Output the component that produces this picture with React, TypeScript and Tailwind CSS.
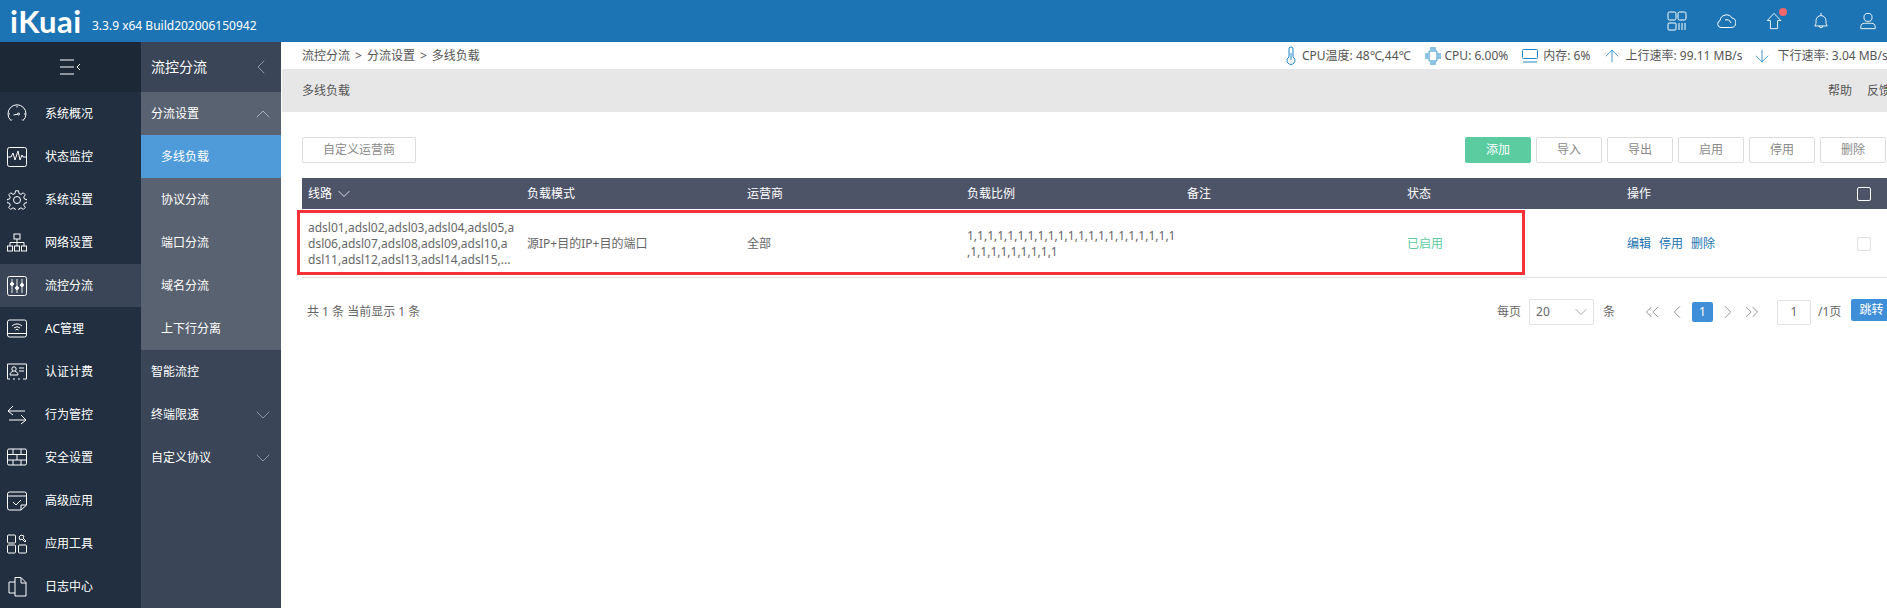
import { ChevronDown, ChevronLeft, ChevronRight, ChevronUp, ChevronsLeft, ChevronsRight, ArrowUp, ArrowDown } from "lucide-react";
import type { ReactNode } from "react";

const font = { fontFamily: '"Noto Sans", "Noto Sans CJK SC", sans-serif' };

function Svg({ children, className = "w-5 h-5" }: { children: ReactNode; className?: string }) {
  return (
    <svg viewBox="0 0 20 20" fill="none" stroke="currentColor" strokeWidth="1" className={className}>
      {children}
    </svg>
  );
}

const navIcons: Record<string, ReactNode> = {
  gauge: <><path d="M4 16.500a9 9 0 1 1 12 0" /><path d="M4 16.500l1-1M16 16.500l-1-1M1.500 10h1.500M17 10h1.500M10 2v1.500" /><circle cx="11.500" cy="10" r="1" /><path d="M10.500 10.200l-4 .8" /></>,
  pulse: <><rect x="0.500" y="0.500" width="19" height="19" rx="2" /><path d="M1 10h3l2-4 2 7 3-9 2 9 2-5 1 2h3" /></>,
  gear: <><circle cx="10" cy="10" r="3.500" /><path d="M8.500 0.800h3l.5 2.700 2 .9 2.300-1.600 2 2-1.600 2.300.9 2 2.700.5v3l-2.700.5-.9 2 1.600 2.300-2 2-2.300-1.600-2 .9-.5 2.700h-3l-.5-2.700-2-.9-2.300 1.600-2-2 1.600-2.300-.9-2-2.700-.5v-3l2.700-.5.9-2-1.600-2.300 2-2 2.300 1.600 2-.9z" /></>,
  network: <><rect x="7" y="1" width="6" height="5" /><rect x="0.500" y="13" width="5" height="5" /><rect x="7.500" y="13" width="5" height="5" /><rect x="14.500" y="13" width="5" height="5" /><path d="M10 6v7M3 13v-3.500h14V13" /></>,
  sliders: <><rect x="0.500" y="0.500" width="19" height="19" rx="2" /><path d="M5 3v14M10 3v14M15 3v14" strokeWidth="1.500" stroke="#aeb4bc" /><circle cx="5" cy="8" r="1.500" fill="currentColor" /><circle cx="10" cy="12" r="1.500" fill="currentColor" /><circle cx="15" cy="9" r="1.500" fill="currentColor" /></>,
  wifi: <><rect x="0.500" y="1" width="19" height="17" rx="2" /><path d="M0.500 14.500h19M5 7a7 7 0 0 1 10 0M7 9a4.500 4.500 0 0 1 6 0M8.500 11a2 2 0 0 1 3 0" /></>,
  card: <><path d="M3 2H0.500v15H3M6 17h2M11 17h2M16 17h3.500V2H3" /><circle cx="7" cy="7" r="2.200" /><path d="M3 13c0-3 2-3 3-4M3 13h8c0-3-2-3-3-4M12 6h5M12 9h5" /></>,
  swap: <><path d="M6 1L1 6l5 4M1 6h17M14 10l5 5-5 4M19 15H2" /></>,
  wall: <><rect x="0.500" y="1" width="19" height="16" rx="1.500" /><path d="M0.500 6.500h19M0.500 12h19M6 1v5.500M14 1v5.500M6 12v5M14 12v5M10 6.500V12" /></>,
  calcheck: <><path d="M19.500 14V3a2 2 0 0 0-2-2h-15a2 2 0 0 0-2 2v14a2 2 0 0 0 2 2H14l5.500-5h-5.500v5" /><path d="M0.500 5h19M6 11l3 3 5-5" /></>,
  apps: <><rect x="0.500" y="1" width="8" height="8" rx="1" /><rect x="0.500" y="11" width="8" height="8" rx="1" /><rect x="11.500" y="11" width="8" height="8" rx="1" /><path d="M12 3l2-2 3 1-1 2 3 3-1 1-3-3-2 1z" /></>,
  docs: <><path d="M8 5V0.500h6l5 5v13.500H8z" /><path d="M14 1v5h5M8 5H2v11h6" /></>,
};

const navItems = [
  { icon: "gauge", label: "系统概况" },
  { icon: "pulse", label: "状态监控" },
  { icon: "gear", label: "系统设置" },
  { icon: "network", label: "网络设置" },
  { icon: "sliders", label: "流控分流", active: true },
  { icon: "wifi", label: "AC管理" },
  { icon: "card", label: "认证计费" },
  { icon: "swap", label: "行为管控" },
  { icon: "wall", label: "安全设置" },
  { icon: "calcheck", label: "高级应用" },
  { icon: "apps", label: "应用工具" },
  { icon: "docs", label: "日志中心" },
];

const subItems = ["多线负载", "协议分流", "端口分流", "域名分流", "上下行分离"];

function Header() {
  return (
    <header className="h-[42px] shrink-0 bg-[#1d74b4] text-white flex items-center">
      <div className="ml-[10px] w-[82px] h-[42px] shrink-0 flex items-center">
        <span className="text-[31px] leading-[38px] font-bold tracking-[0.5px]" style={{ fontFamily: "Lato, sans-serif" }}>iKuai</span>
      </div>
      <span className="text-xs mt-[9px]">3.3.9 x64 Build202006150942</span>
      <div className="ml-auto flex items-center gap-[29px] pr-[10px]">
        <Svg className="w-[20px] h-[22px]">
          <rect x="1" y="1" width="8" height="8" rx="1.500" />
          <rect x="11" y="1" width="8" height="8" rx="1.500" />
          <rect x="1" y="12" width="8" height="7" rx="1" />
          <path d="M12 12v7M15 12v7M18 12v7" />
        </Svg>
        <Svg className="w-[20px] h-[20px]">
          <path d="M5 16.500a3.500 3.500 0 0 1-1-6.800A6.500 6.500 0 0 1 16 7a4.800 4.800 0 0 1-1 9.500zM9 9a5 5 0 0 1 6 3" />
        </Svg>
        <div className="relative">
          <Svg className="w-[18px] h-[20px]"><path d="M10 1.500L2.500 9.500h3.500v9h8v-9h3.500z" /></Svg>
          <span className="absolute -top-[3px] right-[-4px] w-2 h-2 rounded-full bg-[#f0666b]" />
        </div>
        <Svg className="w-[18px] h-[18px]">
          <path d="M3 15.500c1.500-1.500 1.500-3 1.500-6a5.500 5.500 0 0 1 11 0c0 3 0 4.500 1.500 6zM10 1v3M8 15.500a2 2 0 0 0 4 0" />
        </Svg>
        <Svg className="w-[18px] h-[18px]">
          <circle cx="10" cy="6" r="4.500" />
          <path d="M2 18.500v-2c0-3 2-4 4-4h8c2 0 4 1 4 4v2z" />
        </Svg>
      </div>
    </header>
  );
}

function Sidebar() {
  return (
    <nav className="w-[141px] shrink-0 bg-[#212f40] text-white text-xs">
      <div className="h-[50px] bg-[#1c2836] flex items-center justify-center">
        <svg viewBox="0 0 22 16" fill="none" stroke="currentColor" className="w-[22px] h-4">
          <path d="M0 1h14M0 8h14M0 15h14M20 5l-3 3 3 3" />
        </svg>
      </div>
      {navItems.map((n) => (
        <div key={n.label} className={`h-[43px] flex items-center ${n.active ? "bg-[#3a4657]" : ""}`}>
          <span className="ml-[7px] w-[38px]">
            <Svg>{navIcons[n.icon]}</Svg>
          </span>
          {n.label}
        </div>
      ))}
    </nav>
  );
}

function SubNav() {
  return (
    <aside className="w-[140px] shrink-0 bg-[#3a4657] text-white text-xs">
      <div className="h-[50px] pl-[10px] pr-[8px] flex items-center justify-between text-sm">
        流控分流
        <ChevronLeft className="w-6 h-6 text-[#8d95a1]" strokeWidth={1} />
      </div>
      <div className="h-[43px] bg-[#596270] pl-[10px] pr-[6px] flex items-center justify-between">
        分流设置
        <ChevronUp className="w-6 h-6 text-[#aab0b8]" strokeWidth={1} />
      </div>
      <div className="bg-[#596270]">
        {subItems.map((s, i) => (
          <div key={s} className={`h-[43px] pl-[20px] flex items-center ${i === 0 ? "bg-[#4f9bd9]" : ""}`}>{s}</div>
        ))}
      </div>
      <div className="h-[43px] pl-[10px] flex items-center">智能流控</div>
      {["终端限速", "自定义协议"].map((s) => (
        <div key={s} className="h-[43px] pl-[10px] pr-[6px] flex items-center justify-between">
          {s}
          <ChevronDown className="w-6 h-6 text-[#8d95a1]" strokeWidth={1} />
        </div>
      ))}
    </aside>
  );
}

function StatusBar() {
  const blue = "text-[#1c86c8]";
  return (
    <div className="h-[27px] flex items-center text-xs text-[#555] whitespace-nowrap">
      <div className="w-[1005px] shrink-0 pl-[21px] flex gap-[5px]">
        <span>流控分流</span><span>&gt;</span><span>分流设置</span><span>&gt;</span><span>多线负载</span>
      </div>
      <div className="flex items-center shrink-0">
        <svg viewBox="0 0 10 20" fill="none" stroke="currentColor" className={`w-[10px] h-[20px] ${blue}`}>
          <path d="M3 11V3a2 2 0 0 1 4 0v8a4 4 0 1 1-4 0zM5 7v7" />
        </svg>
        <span className="ml-[6px]">CPU温度: 48℃,44℃</span>
        <svg viewBox="0 0 16 18" fill="none" stroke="currentColor" className={`ml-[14px] w-4 h-[18px] ${blue}`}>
          <rect x="4" y="4" width="8" height="10" rx="1" />
          <path d="M0 7h3M0 9h3M0 11h3M13 7h3M13 9h3M13 11h3M6 0v3M8 0v3M10 0v3M6 15v3M8 15v3M10 15v3" />
        </svg>
        <span className="ml-[4px]">CPU: 6.00%</span>
        <svg viewBox="0 0 16 16" fill="none" stroke="currentColor" className={`ml-[14px] w-4 h-4 ${blue}`}>
          <rect x="0.500" y="1.500" width="15" height="9" rx="1" />
          <path d="M2 13v2M4 13v2M6 13v2M8 13v2M10 13v2M12 13v2M14 13v2" />
        </svg>
        <span className="ml-[5px]">内存: 6%</span>
        <ArrowUp className={`ml-[12px] w-5 h-5 ${blue}`} strokeWidth={1} />
        <span className="ml-[3px]">上行速率: 99.11 MB/s</span>
        <ArrowDown className={`ml-[10px] w-5 h-5 ${blue}`} strokeWidth={1} />
        <span className="ml-[5px]">下行速率: 3.04 MB/s</span>
      </div>
    </div>
  );
}

function Btn({ children, className = "" }: { children: ReactNode; className?: string }) {
  return (
    <button className={`h-[26px] rounded-[2px] border text-xs border-[#dcdcdc] text-[#8a8a8a] bg-white ${className}`}>
      {children}
    </button>
  );
}

const cols = "grid grid-cols-[219px_220px_220px_220px_220px_220px_236px_1fr] items-center";
const cell = "pl-[6px]";
const routeLines = ["adsl01,adsl02,adsl03,adsl04,adsl05,a", "dsl06,adsl07,adsl08,adsl09,adsl10,a", "dsl11,adsl12,adsl13,adsl14,adsl15,..."];
const ratioLines = ["1,1,1,1,1,1,1,1,1,1,1,1,1,1,1,1,1,1,1,1,1", ",1,1,1,1,1,1,1,1,1"];

function Table() {
  return (
    <div className="mt-[15px] text-xs">
      <div className={`${cols} h-[31px] bg-[#4e5468] text-white`}>
        <div className={`${cell} flex items-center gap-[2px]`}>线路 <ChevronDown className="w-5 h-5" strokeWidth={1} /></div>
        <div className={cell}>负载模式</div>
        <div className={cell}>运营商</div>
        <div className={cell}>负载比例</div>
        <div className={cell}>备注</div>
        <div className={cell}>状态</div>
        <div className={cell}>操作</div>
        <div className="w-[14px] h-[14px] rounded-[2px] border border-white bg-[#4e5468]" />
      </div>
      <div className={`${cols} relative h-[69px] pt-[2px] border-b border-[#dfdfdf] text-[#666] leading-4`}>
        <div className={`${cell} whitespace-nowrap`}>{routeLines.map((l) => <div key={l}>{l}</div>)}</div>
        <div className={cell}>源IP+目的IP+目的端口</div>
        <div className={cell}>全部</div>
        <div className={`${cell} whitespace-nowrap`}>{ratioLines.map((l) => <div key={l}>{l}</div>)}</div>
        <div className={cell} />
        <div className={`${cell} text-[#5acc9f]`}>已启用</div>
        <div className={`${cell} flex gap-2 text-[#1d74b4]`}><span>编辑</span><span>停用</span><span>删除</span></div>
        <div className="w-[14px] h-[14px] rounded-[2px] border border-[#dfdfdf]" />
        <div className="absolute left-[-5px] top-[1px] w-[1228px] h-[65px] border-[3px] border-[#f5323a] pointer-events-none" />
      </div>
    </div>
  );
}

function Pagination() {
  return (
    <div className="mt-[21px] h-[26px] flex items-center text-xs text-[#666] whitespace-nowrap [&>*]:shrink-0">
      <span className="pl-[5px] w-[1195px]">共 1 条 当前显示 1 条</span>
      <span>每页</span>
      <div className="ml-[8px] w-[65px] h-[26px] border border-[#dfdfdf] rounded-[2px] flex items-center justify-between pl-[6px] pr-[2px]">
        20 <ChevronDown className="w-5 h-5 text-[#999]" strokeWidth={1} />
      </div>
      <span className="ml-[9px]">条</span>
      <ChevronsLeft className="ml-[26px] w-[22px] h-[22px] text-[#888]" strokeWidth={1} />
      <ChevronLeft className="ml-[3px] w-[22px] h-[22px] text-[#888]" strokeWidth={1} />
      <span className="ml-[4px] w-[21px] h-[20px] rounded-[2px] bg-[#3f8fd8] text-white flex items-center justify-center">1</span>
      <ChevronRight className="ml-[4px] w-[22px] h-[22px] text-[#888]" strokeWidth={1} />
      <ChevronsRight className="ml-[2px] w-[22px] h-[22px] text-[#888]" strokeWidth={1} />
      <span className="ml-[14px] w-[34px] h-[25px] border border-[#dfdfdf] rounded-[2px] flex items-center justify-center">1</span>
      <span className="ml-[7px]">/1页</span>
      <span className="ml-[10px] w-[40px] h-[22px] -mt-1 rounded-[2px] bg-[#3f8fd8] text-white flex items-center pl-[8px]">跳转</span>
    </div>
  );
}

export default function App() {
  return (
    <div className="w-[1887px] h-[608px] overflow-hidden flex flex-col bg-white" style={font}>
      <Header />
      <div className="flex flex-1 min-h-0">
        <Sidebar />
        <SubNav />
        <main className="flex-1 min-w-0 overflow-hidden">
          <StatusBar />
          <div className="ml-[1px] h-[43px] bg-[#e7e7e7] flex items-center text-xs text-[#555] whitespace-nowrap">
            <span className="pl-[20px] w-[1546px] shrink-0">多线负载</span>
            <span>帮助</span>
            <span className="ml-[15px]">反馈</span>
          </div>
          <div className="pl-[21px]">
            <div className="mt-[25px] flex items-center">
              <Btn className="w-[114px]">自定义运营商</Btn>
              <div className="ml-auto mr-[1px] flex gap-[5px]">
                <button className="w-[66px] h-[26px] rounded-[2px] bg-[#5acc9f] text-white text-xs">添加</button>
                {["导入", "导出", "启用", "停用", "删除"].map((b) => <Btn key={b} className="w-[66px]">{b}</Btn>)}
              </div>
            </div>
            <Table />
            <Pagination />
          </div>
        </main>
      </div>
    </div>
  );
}
